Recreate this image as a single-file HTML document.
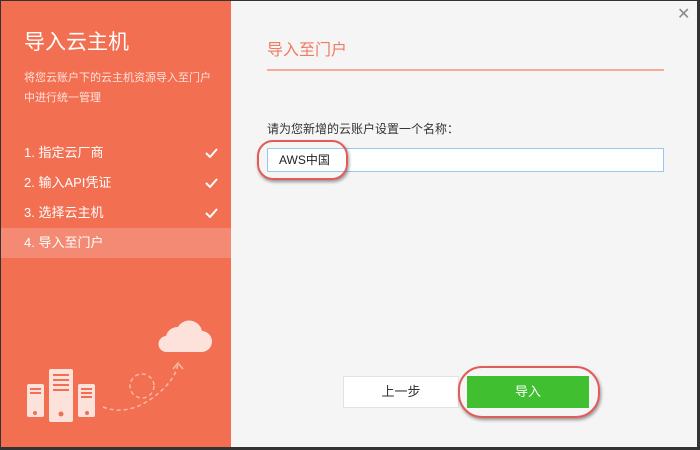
<!DOCTYPE html>
<html><head><meta charset="utf-8"><style>
*{margin:0;padding:0;box-sizing:border-box}
body{width:700px;height:450px;overflow:hidden;background:#333;font-family:"Liberation Sans","Noto Sans CJK SC",sans-serif;position:relative}
.win{position:absolute;left:1px;top:1px;width:696px;height:446px;background:#f5f5f5}
.left{position:absolute;left:0;top:0;width:230px;height:446px;background:#f26f52;color:#fff}
.t{position:absolute;left:23px;top:25px;font-size:21px}
.d{position:absolute;left:23px;top:67px;font-size:11px;line-height:20px;color:#fde3dc}
.it{position:absolute;left:0;width:230px;height:30px;line-height:30px;padding-left:23px;font-size:13px;color:#fff}
.ck{position:absolute;left:204px;top:10px}
.sel{background:#f48a73}
.rt{position:absolute;left:266px;top:35px;font-size:16px;color:#f07a62}
.ln{position:absolute;left:266px;top:68px;width:397px;height:2px;background:#f6ab98}
.lb{position:absolute;left:266px;top:119px;font-size:12px;color:#333}
.in{position:absolute;left:266px;top:147px;width:397px;height:24px;background:#fff;border:1px solid #9cc7ec;font-size:12px;padding-left:11px;line-height:22px;color:#222}
.b1{position:absolute;left:342px;top:375px;width:116px;height:32px;background:#fff;border:1px solid #e2e2e2;font-size:13px;text-align:center;line-height:30px;color:#333}
.b2{position:absolute;left:466px;top:375px;width:122px;height:32px;background:#40bf30;font-size:13px;text-align:center;line-height:32px;color:#fff}
.el{position:absolute;border:2px solid #e25a5a;box-shadow:1px 2px 3px rgba(0,0,0,.4)}
.x{position:absolute;left:676px;top:3px;font-size:16px;color:#888}
</style></head><body>
<div class="win">
<div class="left">
<div class="t">导入云主机</div>
<div class="d">将您云账户下的云主机资源导入至门户<br>中进行统一管理</div>
<div class="it" style="top:137px">1. 指定云厂商<svg class="ck" width="13" height="10"><path d="M1 5 L5 9 L12 1" fill="none" stroke="#fff" stroke-width="2"/></svg></div>
<div class="it" style="top:167px">2. 输入API凭证<svg class="ck" width="13" height="10"><path d="M1 5 L5 9 L12 1" fill="none" stroke="#fff" stroke-width="2"/></svg></div>
<div class="it" style="top:197px">3. 选择云主机<svg class="ck" width="13" height="10"><path d="M1 5 L5 9 L12 1" fill="none" stroke="#fff" stroke-width="2"/></svg></div>
<div class="it sel" style="top:227px">4. 导入至门户</div>
<svg style="position:absolute;left:0;top:300px" width="230" height="146" viewBox="0 0 230 146">
<g fill="#fde2db">
<path d="M166 51 a8 8 0 0 1 -1 -16 a12 12 0 0 1 12 -9 a13 13 0 0 1 24 4 a10.5 10.5 0 0 1 -1 21 z"/>
<rect x="26" y="83" width="17" height="33" rx="2"/>
<rect x="48" y="68" width="24" height="53" rx="2"/>
<rect x="77" y="83" width="17" height="33" rx="2"/>
</g>
<g fill="#f26f52">
<rect x="29" y="87" width="11" height="2"/><rect x="29" y="91" width="11" height="2"/>
<rect x="52" y="73" width="16" height="2"/><rect x="52" y="78" width="16" height="2"/><rect x="52" y="83" width="16" height="2"/><rect x="52" y="88" width="16" height="2"/>
<rect x="80" y="87" width="11" height="2"/><rect x="80" y="91" width="11" height="2"/><rect x="80" y="95" width="11" height="2"/>
<circle cx="34" cy="112" r="2"/><circle cx="60" cy="113" r="2.5"/><circle cx="86" cy="112" r="2"/>
</g>
<g fill="none" stroke="#f9b7a6" stroke-width="1.5" stroke-dasharray="4 3">
<path d="M102 106 Q125 115 150 98 Q175 80 177 62"/>
<circle cx="141" cy="85" r="12"/>
<path d="M172 68 L177 62 L182 68" stroke-dasharray="none"/>
</g>
</svg>
</div>
<div class="x">✕</div>
<div class="rt">导入至门户</div>
<div class="ln"></div>
<div class="lb">请为您新增的云账户设置一个名称：</div>
<div class="in">AWS中国</div>
<div class="el" style="left:256px;top:139px;width:91px;height:40px;border-radius:16px"></div>
<div class="b1">上一步</div>
<div class="b2">导入</div>
<div class="el" style="left:457px;top:365px;width:142px;height:52px;border-radius:24px"></div>
</div>
</body></html>
